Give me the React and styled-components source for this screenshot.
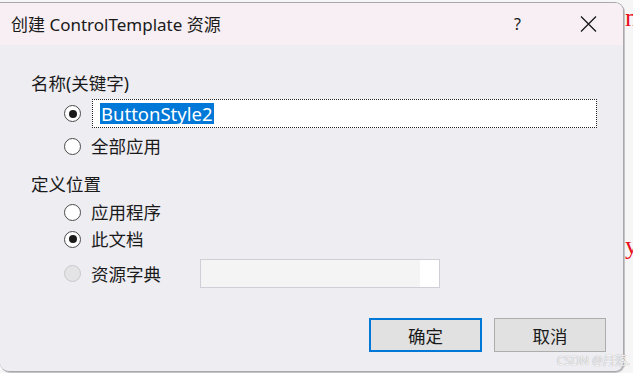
import React from "react";
import styled, { createGlobalStyle } from "styled-components";

const GlobalStyle = createGlobalStyle`
  html, body {
    margin: 0;
    padding: 0;
    background: #f6f6f6;
    font-family: "Noto Sans", "Noto Sans CJK SC", sans-serif;
  }
`;

export default function App() {
  return (
    <>
      <GlobalStyle />
      <Screen>
        <Dialog>
          <TitleBar>
            <Title>创建 ControlTemplate 资源</Title>
            <HelpButton>?</HelpButton>
            <CloseButton aria-label="close">
              <svg width="17" height="16" viewBox="0 0 17 16">
                <path d="M1 0.5 L16 15.5 M16 0.5 L1 15.5" stroke="#1a1a1a" strokeWidth="1.3" />
              </svg>
            </CloseButton>
          </TitleBar>

          <Body>
            <SectionLabel $top={28}>名称(关键字)</SectionLabel>
            <OptionRow $top={6} $height={29}>
              <Radio $checked />
              <NameInput>
                <Selected>ButtonStyle2</Selected>
              </NameInput>
            </OptionRow>
            <OptionRow $top={6} $height={24}>
              <Radio />
              <OptionText>全部应用</OptionText>
            </OptionRow>

            <SectionLabel $top={16}>定义位置</SectionLabel>
            <OptionRow $top={6} $height={24}>
              <Radio />
              <OptionText>应用程序</OptionText>
            </OptionRow>
            <OptionRow $top={3} $height={24}>
              <Radio $checked />
              <OptionText>此文档</OptionText>
            </OptionRow>
            <OptionRow $top={8} $height={29}>
              <Radio $disabled />
              <OptionText>资源字典</OptionText>
              <DictBox>
                <DictFill />
              </DictBox>
            </OptionRow>

            <Footer>
              <Button $primary>确定</Button>
              <Button>取消</Button>
            </Footer>
          </Body>
        </Dialog>

        <Backdrop>
          <CodeGlyph $top={4}>n</CodeGlyph>
          <CodeGlyph $top={200}>y</CodeGlyph>
        </Backdrop>

        <Watermark>CSDN @月落.</Watermark>
      </Screen>
    </>
  );
}

const Screen = styled.div`
  position: relative;
  width: 633px;
  height: 373px;
  display: flex;
  overflow: hidden;
`;

const Dialog = styled.div`
  box-sizing: border-box;
  width: 624px;
  height: 370px;
  margin-top: 2px;
  flex-shrink: 0;
  display: flex;
  flex-direction: column;
  background: #eeedf2;
  border: 1px solid #a9a9ad;
  border-left: none;
  border-radius: 0 9px 9px 9px;
  box-shadow: 1px 1px 0 #c4c4c8;
  overflow: hidden;
`;

const TitleBar = styled.div`
  height: 42px;
  display: flex;
  align-items: center;
  background: #f7eff3;
  padding-left: 11px;
`;

const Title = styled.div`
  font-size: 17px;
  color: #1a1a1a;
  flex: 1;
  margin-top: -1px;
`;

const HelpButton = styled.div`
  font-size: 16px;
  color: #1a1a1a;
  width: 20px;
  margin-right: 46px;
  margin-top: -1px;
`;

const CloseButton = styled.div`
  width: 17px;
  height: 16px;
  margin-right: 26px;
  display: flex;
`;

const Body = styled.div`
  flex: 1;
  display: flex;
  flex-direction: column;
`;

const SectionLabel = styled.div`
  margin: ${(p) => p.$top}px 0 0 31px;
  line-height: 20px;
  font-size: 17.5px;
  color: #1a1a1a;
`;

const OptionRow = styled.div`
  margin-top: ${(p) => p.$top}px;
  height: ${(p) => p.$height}px;
  padding-left: 64px;
  display: flex;
  align-items: center;
`;

const Radio = styled.span`
  box-sizing: border-box;
  width: 17px;
  height: 17px;
  flex-shrink: 0;
  border-radius: 50%;
  border: 1px solid ${(p) => (p.$disabled ? "#c9c9cc" : "#4a4a4a")};
  background: ${(p) => (p.$disabled ? "#e4e4e6" : "#ffffff")};
  display: flex;
  align-items: center;
  justify-content: center;
  margin-right: 10px;

  &::after {
    content: "";
    width: 8px;
    height: 8px;
    border-radius: 50%;
    background: #1a1a1a;
    display: ${(p) => (p.$checked ? "block" : "none")};
  }
`;

const OptionText = styled.span`
  font-size: 17.5px;
  line-height: 20px;
  color: #1a1a1a;
  width: 109px;
  white-space: nowrap;
`;

const NameInput = styled.div`
  box-sizing: border-box;
  margin-left: 1px;
  width: 505px;
  height: 29px;
  background: #ffffff;
  border: 1px dotted #222;
  display: flex;
  align-items: center;
  padding-left: 7px;
`;

const Selected = styled.span`
  background: #0078d7;
  color: #ffffff;
  font-size: 18.5px;
  line-height: 21px;
  padding: 0 1px;
`;

const DictBox = styled.div`
  box-sizing: border-box;
  width: 240px;
  height: 29px;
  border: 1px solid #cfcfd8;
  background: #ffffff;
  display: flex;
`;

const DictFill = styled.div`
  width: 219px;
  background: #f4f4f4;
`;

const Footer = styled.div`
  margin-top: 30px;
  display: flex;
  justify-content: flex-end;
  gap: 12px;
  padding-right: 17px;
`;

const Button = styled.button`
  box-sizing: border-box;
  width: ${(p) => (p.$primary ? 113 : 112)}px;
  height: 34px;
  background: #e1e1e1;
  border: ${(p) => (p.$primary ? "2px solid #0078d7" : "1px solid #adadad")};
  font-family: "Noto Sans CJK SC", sans-serif;
  font-size: 17.5px;
  color: #1a1a1a;
  padding: 0;
`;

const Watermark = styled.div`
  position: absolute;
  right: 3px;
  bottom: 5px;
  font-size: 12px;
  line-height: 14px;
  color: #f4f4f6;
  text-shadow: 0 0 1px #8a8a8a;
  white-space: nowrap;
`;

const Backdrop = styled.div`
  flex: 1;
  display: flex;
  flex-direction: column;
  padding-left: 1px;
  overflow: hidden;
`;

const CodeGlyph = styled.span`
  margin-top: ${(p) => p.$top}px;
  font-family: "Liberation Serif", serif;
  font-size: 26px;
  line-height: 28px;
  color: #e8101c;
`;
